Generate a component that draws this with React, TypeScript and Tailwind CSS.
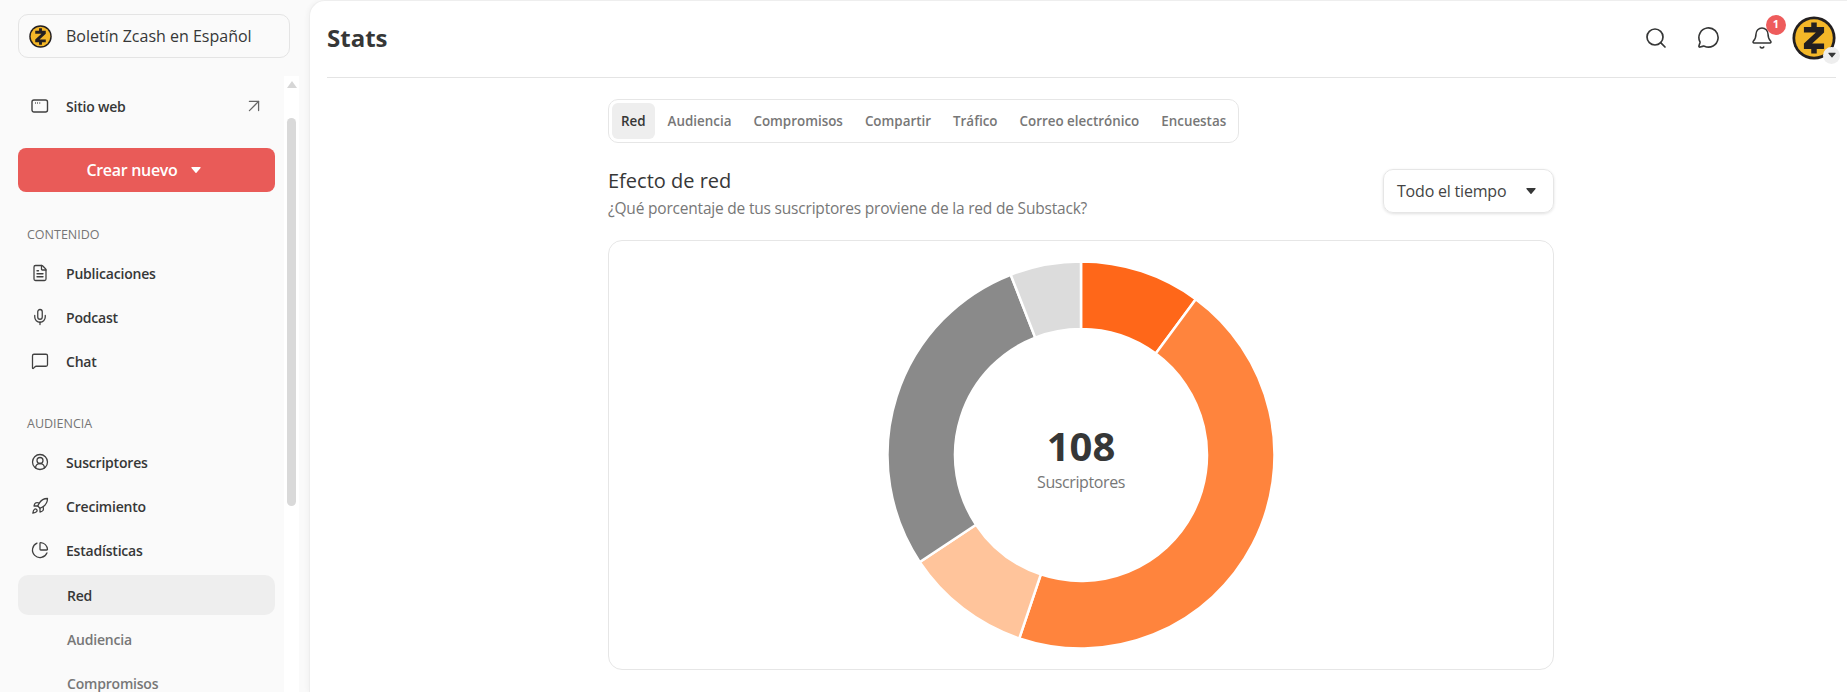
import { ArrowUpRight, Bell, FileText, MessageCircle, MessageSquare, Mic, PieChart, Rocket, Search, UserCircle2 } from "lucide-react";

const contenido = [
  { icon: FileText, label: "Publicaciones" },
  { icon: Mic, label: "Podcast" },
  { icon: MessageSquare, label: "Chat" },
];

const audiencia = [
  { icon: UserCircle2, label: "Suscriptores" },
  { icon: Rocket, label: "Crecimiento" },
  { icon: PieChart, label: "Estadísticas" },
];

const tabs = ["Red", "Audiencia", "Compromisos", "Compartir", "Tráfico", "Correo electrónico", "Encuestas"];

// start and end angle of each donut slice, in degrees from 12 o'clock
const slices = [
  { from: 0, to: 36.4, color: "#ff6719" },
  { from: 36.4, to: 198.6, color: "#ff843d" },
  { from: 198.6, to: 236.4, color: "#ffc49b" },
  { from: 236.4, to: 338.7, color: "#8a8a8a" },
  { from: 338.7, to: 360, color: "#dcdcdc" },
];

function point(radius: number, angle: number) {
  const rad = (angle * Math.PI) / 180;
  return `${200 + radius * Math.sin(rad)} ${200 - radius * Math.cos(rad)}`;
}

function slicePath(from: number, to: number) {
  const large = to - from > 180 ? 1 : 0;
  return `M${point(193.5, from)} A193.5 193.5 0 ${large} 1 ${point(193.5, to)} L${point(126, to)} A126 126 0 ${large} 0 ${point(126, from)} Z`;
}

function ZcashLogo({ className }: { className: string }) {
  return (
    <svg viewBox="0 0 48 48" className={className}>
      <circle cx="24" cy="24" r="23.5" fill="#231f20" />
      <circle cx="24" cy="24" r="20.5" fill="#f4b728" />
      <path d="M21 7h6v5h8v6L22 30h13v6h-8v5h-6v-5h-8v-6l13-12H13v-6h8z" fill="#231f20" />
    </svg>
  );
}

function Caret({ className }: { className: string }) {
  return (
    <svg viewBox="0 0 12 9" className={className} fill="currentColor">
      <path d="M1.2 1h9.6c.6 0 .9.6.6 1.1L6.6 7.8c-.3.4-.9.4-1.2 0L.6 2.1C.3 1.6.6 1 1.2 1z" />
    </svg>
  );
}

function NavRow({ icon: Icon, label }: { icon: typeof Mic; label: string }) {
  return (
    <div className="flex h-11 items-center pl-[31px] text-[14px] font-semibold tracking-[-0.2px] text-[#363737]">
      <Icon className="h-[18px] w-[18px] text-[#404040]" strokeWidth={1.7} />
      <span className="ml-[17px]">{label}</span>
    </div>
  );
}

function Sidebar() {
  return (
    <aside className="flex h-full w-[309px] shrink-0 flex-col overflow-hidden bg-[#fafafa]">
      <div className="px-[18px] pt-[14px]">
        <div className="flex h-[44px] w-[272px] items-center rounded-[10px] border border-[#e4e4e4] pl-[10px] text-[16px] font-medium text-[#363737]">
          <ZcashLogo className="h-[23px] w-[23px]" />
          <span className="ml-[14px]">Boletín Zcash en Español</span>
        </div>
      </div>
      <div className="relative mt-[18px] min-h-0 flex-1 pl-[18px] pt-[8px]">
        <div className="w-[257px]">
          <div className="flex h-11 items-center pl-[13px] pr-[10px] text-[14px] font-semibold tracking-[-0.2px] text-[#363737]">
            <svg viewBox="0 0 18 18" className="h-[18px] w-[18px]" fill="none" stroke="#404040" strokeWidth="1.4">
              <rect x="1" y="3" width="15.5" height="12" rx="2" />
              <path d="M4 6h.8M6.2 6h.8M8.4 6h.8" />
            </svg>
            <span className="ml-[17px] flex-1">Sitio web</span>
            <ArrowUpRight className="h-[22px] w-[22px] text-[#666666]" strokeWidth={1.4} />
          </div>
          <div className="mt-[20px] flex h-[44px] items-center justify-center gap-[13px] rounded-[8px] bg-[#e95b58] pr-[6px] text-[16px] font-semibold tracking-[-0.3px] text-white">
            Crear nuevo
            <Caret className="h-[8px] w-[10px]" />
          </div>
          <div className="mt-[35px] pl-[9px] text-[12.5px] font-normal leading-[16px] text-[#757575]">CONTENIDO</div>
          <div className="-ml-[18px] mt-[8px] flex flex-col">
            {contenido.map((item) => (
              <NavRow key={item.label} icon={item.icon} label={item.label} />
            ))}
          </div>
          <div className="mt-[33px] pl-[9px] text-[12.5px] font-normal leading-[16px] text-[#757575]">AUDIENCIA</div>
          <div className="-ml-[18px] mt-[8px] flex flex-col">
            {audiencia.map((item) => (
              <NavRow key={item.label} icon={item.icon} label={item.label} />
            ))}
          </div>
          <div className="mt-[3px] flex h-[40px] items-center rounded-[10px] bg-[#eeeeee] pl-[49px] text-[14px] font-semibold tracking-[-0.2px] text-[#363737]">
            Red
          </div>
          <div className="mt-[2px] flex h-[44px] items-center pl-[49px] text-[14px] font-semibold tracking-[-0.2px] text-[#777777]">Audiencia</div>
          <div className="flex h-[44px] items-center pl-[49px] text-[14px] font-semibold tracking-[-0.2px] text-[#777777]">Compromisos</div>
        </div>
        {/* scrollbar */}
        <div className="absolute bottom-0 left-[284px] top-0 w-[15px] bg-white">
          <div className="mx-auto mt-[5px] h-0 w-0 border-x-[5px] border-b-[7px] border-x-transparent border-b-[#d6d6d6]" />
          <div className="absolute left-[3px] top-[42px] h-[388px] w-[9px] rounded-full bg-[#d9d9d9]" />
        </div>
      </div>
    </aside>
  );
}

function Header() {
  return (
    <header className="ml-[17px] mr-[11px] flex h-[77px] items-center justify-between border-b border-[#e4e4e4] pb-[2px]">
      <h1 className="text-[24px] font-bold text-[#363737]">Stats</h1>
      <div className="-mt-[1px] flex items-center">
        <Search className="mr-[29px] h-[24px] w-[24px] text-[#363737]" strokeWidth={1.7} />
        <MessageCircle className="mr-[30px] h-[23px] w-[23px] text-[#363737]" strokeWidth={1.7} />
        <div className="relative mr-[18px]">
          <Bell className="h-[24px] w-[24px] text-[#363737]" strokeWidth={1.5} />
          <span className="absolute -right-[12px] -top-[11px] flex h-[20px] w-[20px] items-center justify-center rounded-full bg-[#ee5c5c] text-[11px] font-bold text-white">
            1
          </span>
        </div>
        <div className="relative">
          <ZcashLogo className="h-[44px] w-[44px]" />
          <span className="absolute -bottom-[4px] -right-[4px] flex h-[17px] w-[17px] items-center justify-center rounded-full bg-[#eeeeee]">
            <Caret className="h-[6px] w-[8px] text-[#363737]" />
          </span>
        </div>
      </div>
    </header>
  );
}

function Stats() {
  return (
    <div className="pl-[5px]">
      <div className="mx-auto mt-[21px] w-[946px]">
        <div className="inline-flex h-[44px] items-center gap-[4px] rounded-[10px] border border-[#e6e6e6] p-[3px] text-[13.4px] font-semibold text-[#777777]">
          {tabs.map((tab, i) => (
            <span
              key={tab}
              className={i === 0 ? "flex h-full items-center rounded-[6px] bg-[#eeeeee] px-[9px] text-[#363737]" : "flex h-full items-center px-[9px]"}
            >
              {tab}
            </span>
          ))}
        </div>
        <div className="mt-[26px] flex items-start justify-between">
          <div>
            <h2 className="text-[20px] font-medium leading-[24px] text-[#363737]">Efecto de red</h2>
            <p className="mt-[4px] text-[15.5px] leading-[22px] tracking-[-0.2px] text-[#777777]">¿Qué porcentaje de tus suscriptores proviene de la red de Substack?</p>
          </div>
          <div className="flex h-[44px] w-[171px] items-center justify-between rounded-[10px] border border-[#e6e6e6] pl-[13px] pr-[17px] text-[16px] tracking-[-0.2px] text-[#444444] shadow-[0_1px_3px_rgba(0,0,0,0.12)]">
            Todo el tiempo
            <Caret className="h-[8px] w-[10px] text-[#363737]" />
          </div>
        </div>
        <div className="mt-[21px] flex h-[430px] justify-center rounded-[14px] border border-[#e6e6e6] pt-[14px]">
          <div className="relative h-[400px] w-[400px]">
            <svg viewBox="0 0 400 400" className="h-full w-full">
              {slices.map((s) => (
                <path key={s.from} d={slicePath(s.from, s.to)} fill={s.color} stroke="#ffffff" strokeWidth="2.5" />
              ))}
            </svg>
            <div className="absolute inset-0 flex flex-col items-center justify-center pt-[4px]">
              <div className="text-[40px] font-bold leading-[46px] text-[#363737]">108</div>
              <div className="mt-[3px] text-[16px] leading-[20px] tracking-[-0.4px] text-[#777777]">Suscriptores</div>
            </div>
          </div>
        </div>
      </div>
    </div>
  );
}

export default function App() {
  return (
    <div className="flex h-screen overflow-hidden bg-[#fafafa] font-['Open_Sans',sans-serif]">
      <Sidebar />
      <main className="min-w-0 flex-1 overflow-hidden rounded-tl-[16px] border-l border-t border-[#eeeeee] bg-white shadow-[-2px_0_4px_rgba(0,0,0,0.03)]">
        <Header />
        <Stats />
      </main>
    </div>
  );
}
